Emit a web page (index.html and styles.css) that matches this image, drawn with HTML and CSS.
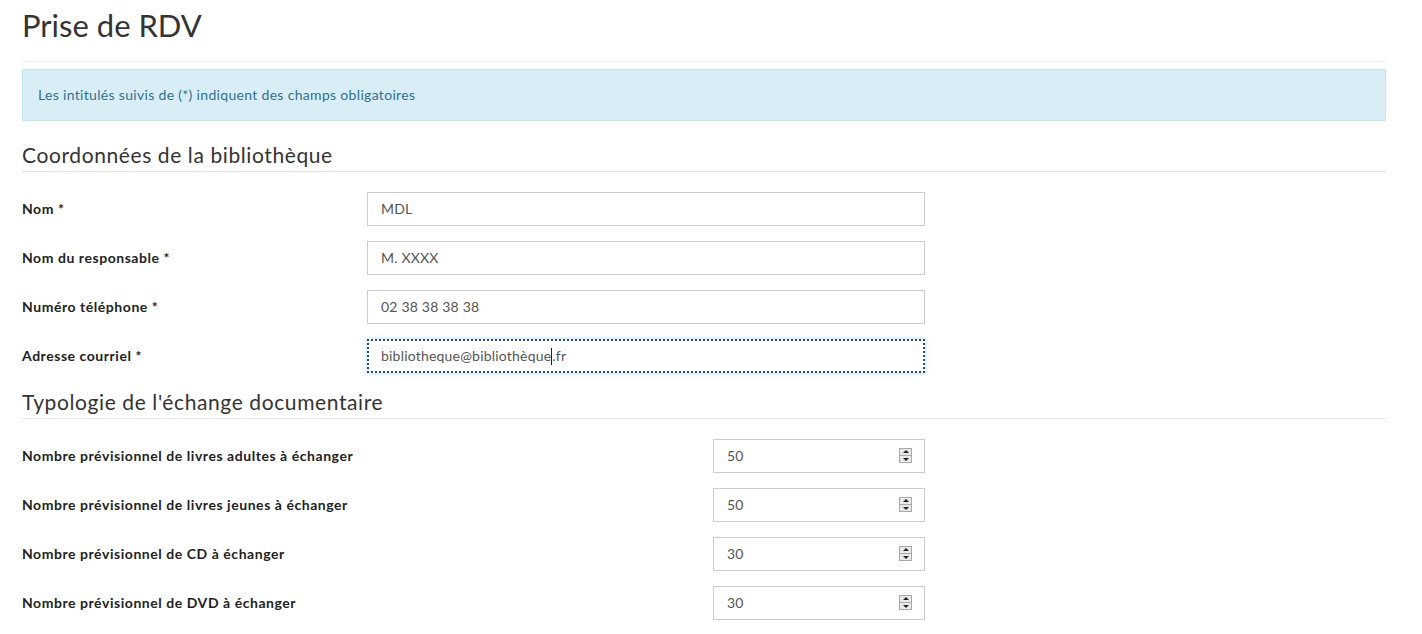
FILE: index.html
```html
<!DOCTYPE html>
<html lang="fr">
<head>
<meta charset="utf-8">
<title>Prise de RDV</title>
<link rel="stylesheet" href="styles.css">
</head>
<body>
<div class="page">
  <h1 class="title">Prise de RDV</h1>
  <hr class="sep">
  <div class="alert">Les intitulés suivis de (*) indiquent des champs obligatoires</div>

  <h2 class="legend">Coordonnées de la bibliothèque</h2>
  <div class="rows">
    <div class="row">
      <label class="lbl">Nom *</label>
      <div class="field wide"><span class="val">MDL</span></div>
    </div>
    <div class="row">
      <label class="lbl">Nom du responsable *</label>
      <div class="field wide"><span class="val">M. XXXX</span></div>
    </div>
    <div class="row">
      <label class="lbl">Numéro téléphone *</label>
      <div class="field wide"><span class="val">02 38 38 38 38</span></div>
    </div>
    <div class="row">
      <label class="lbl">Adresse courriel *</label>
      <div class="field wide focus"><span class="val">bibliotheque@bibliothèque<span class="caret"></span>.fr</span></div>
    </div>
  </div>

  <h2 class="legend second">Typologie de l'échange documentaire</h2>
  <div class="rows">
    <div class="row">
      <label class="lbl">Nombre prévisionnel de livres adultes à échanger</label>
      <div class="field num"><span class="val">50</span><span class="spin"><span class="up"></span><span class="down"></span></span></div>
    </div>
    <div class="row">
      <label class="lbl">Nombre prévisionnel de livres jeunes à échanger</label>
      <div class="field num"><span class="val">50</span><span class="spin"><span class="up"></span><span class="down"></span></span></div>
    </div>
    <div class="row">
      <label class="lbl">Nombre prévisionnel de CD à échanger</label>
      <div class="field num"><span class="val">30</span><span class="spin"><span class="up"></span><span class="down"></span></span></div>
    </div>
    <div class="row">
      <label class="lbl">Nombre prévisionnel de DVD à échanger</label>
      <div class="field num"><span class="val">30</span><span class="spin"><span class="up"></span><span class="down"></span></span></div>
    </div>
  </div>
</div>
</body>
</html>
```

FILE: styles.css
```css
html, body {
  margin: 0;
  padding: 0;
  background: #fff;
}
body {
  font-family: "Lato", "Open Sans", sans-serif;
  color: #333;
  overflow: hidden;
}
.page {
  width: 1364px;
  margin-left: 22px;
}
.title {
  margin: 0;
  padding-top: 7px;
  font-size: 31px;
  font-weight: 400;
  line-height: 36px;
  color: #333;
}
.sep {
  margin: 18px 0 7px;
  border: 0;
  border-top: 1px solid #eee;
}
.alert {
  box-sizing: border-box;
  height: 52px;
  padding: 0 15px 2px;
  display: flex;
  align-items: center;
  background: #d9edf7;
  border: 1px solid #bce8f1;
  color: #31708f;
  font-size: 14px;
  letter-spacing: 0.32px;
}
.legend {
  margin: 24px 0 0;
  padding-bottom: 7px;
  border-bottom: 1px solid #e5e5e5;
  font-size: 21px;
  font-weight: 400;
  line-height: 19px;
  color: #333;
  letter-spacing: 0.6px;
}
.legend.second {
  margin-top: 19px;
}
.rows {
  display: flex;
  flex-direction: column;
  gap: 15px;
  padding-top: 20px;
}
.row {
  display: flex;
  align-items: center;
  justify-content: space-between;
  width: 903px;
}
.lbl {
  padding-bottom: 2px;
  font-size: 14px;
  font-weight: 700;
  color: #222;
  letter-spacing: 0.55px;
}
.field {
  box-sizing: border-box;
  height: 34px;
  display: flex;
  align-items: center;
  padding: 0 13px 1px;
  border: 1px solid #ccc;
  background: #fff;
  font-size: 14px;
  color: #555;
  letter-spacing: 0.2px;
}
.wide {
  width: 558px;
}
.num {
  width: 212px;
  justify-content: space-between;
}
.focus {
  border: 2px dotted #1c4a86;
  padding: 0 12px 1px;
  box-shadow: 0 0 4px rgba(102, 175, 233, 0.6);
}
.val {
  position: relative;
}
.caret {
  display: inline-block;
  width: 1px;
  height: 17px;
  background: #222;
  vertical-align: -4px;
}
.spin {
  display: flex;
  flex-direction: column;
  width: 13px;
  height: 15px;
  margin-right: -1px;
  border: 1px solid #a9a9a9;
  box-sizing: border-box;
  background: #e9e9e9;
}
.spin .up, .spin .down {
  flex: 1;
  position: relative;
}
.spin .up {
  border-bottom: 1px solid #a9a9a9;
}
.spin .up::after, .spin .down::after {
  content: "";
  position: absolute;
  left: 3px;
  border-left: 3px solid transparent;
  border-right: 3px solid transparent;
}
.spin .up::after {
  top: 1px;
  border-bottom: 3px solid #222;
}
.spin .down::after {
  top: 2px;
  border-top: 3px solid #222;
}
```
